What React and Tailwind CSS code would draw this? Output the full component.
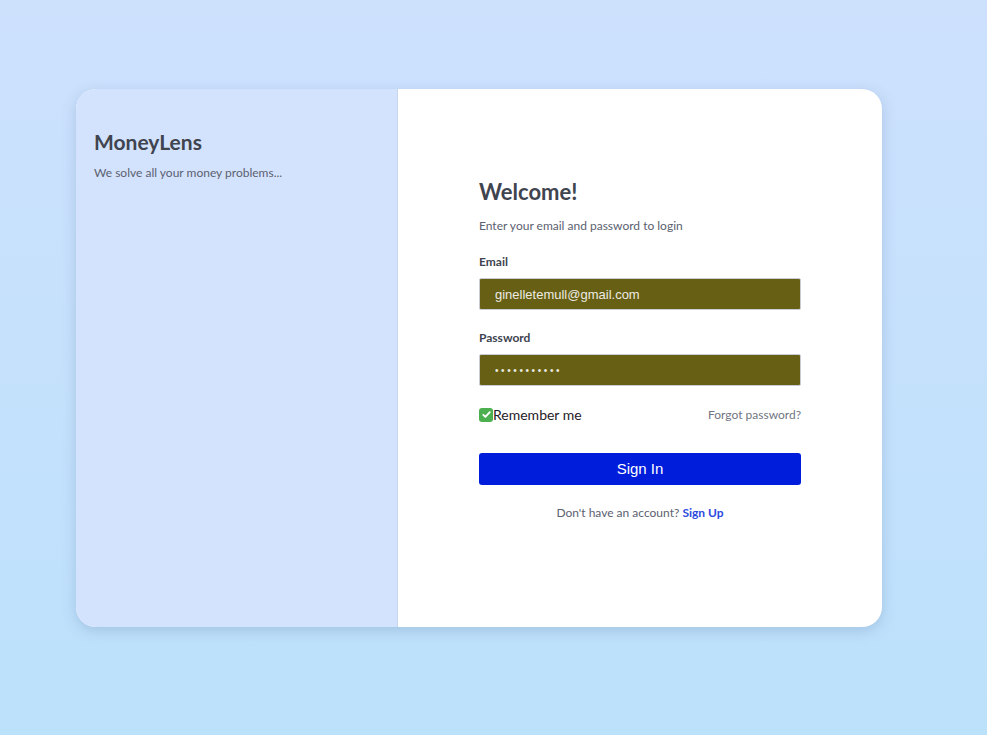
import React from 'react';

const CheckIcon = () => (
  <span className="flex h-[14px] w-[14px] items-center justify-center rounded-[3px] bg-[#4caf50]">
    <svg viewBox="0 0 12 12" className="h-[11px] w-[11px]" fill="none" stroke="white" strokeWidth="2" strokeLinecap="round" strokeLinejoin="round">
      <path d="M2.5 6.3l2.3 2.3 4.8-5.2" />
    </svg>
  </span>
);

export default function App() {
  return (
    <div
      className="flex min-h-[735px] w-full items-start justify-start bg-gradient-to-b from-[#cde1fd] to-[#bce1fb] pl-[76px] pt-[89px] text-[#3f4450]"
      style={{ fontFamily: 'Lato, "Open Sans", sans-serif' }}
    >
      <div className="flex h-[538px] w-[806px] overflow-hidden rounded-[20px] bg-white shadow-[0_4px_14px_rgba(80,110,160,0.25)]">
        {/* brand panel */}
        <div className="w-[322px] shrink-0 border-r border-[#c7d6ee] bg-[#d4e3fd] px-[18px] pt-[40px]">
          <h1 className="text-[21px] font-bold leading-[26px] text-[#40444f]">MoneyLens</h1>
          <p className="mt-[9px] text-[12px] text-[#5b6170]">We solve all your money problems...</p>
        </div>

        {/* form */}
        <div className="flex flex-1 justify-center pt-[89px]">
          <div className="w-[322px]">
            <h2 className="text-[22px] font-bold leading-[28px] text-[#40444f]">Welcome!</h2>
            <p className="mt-[11px] text-[12px] text-[#5b6170]">Enter your email and password to login</p>

            <label className="mt-[18px] block text-[12px] font-bold text-[#40444f]">Email</label>
            <input
              readOnly
              value="ginelletemull@gmail.com"
              className="mt-[7px] block h-[32px] w-full rounded-[2px] border border-[#c9ccd2] bg-[#675f13] px-[15px] text-[13px] text-[#ecebe2] outline-none"
              style={{ fontFamily: '"Liberation Sans", Arial, sans-serif' }}
            />

            <label className="mt-[19px] block text-[12px] font-bold text-[#40444f]">Password</label>
            <input
              readOnly
              type="password"
              value="password123"
              className="mt-[7px] block h-[32px] w-full rounded-[2px] border border-[#c9ccd2] bg-[#675f13] px-[15px] text-[10px] tracking-[2.6px] text-[#ecebe2] outline-none"
              style={{ fontFamily: '"Liberation Sans", Arial, sans-serif' }}
            />

            <div className="mt-[18px] flex items-center justify-between">
              <div className="flex items-center">
                <CheckIcon />
                <span className="text-[14px] text-[#1f2228]">Remember me</span>
              </div>
              <a className="text-[12px] text-[#70757f]">Forgot password?</a>
            </div>

            <button
              className="mt-[28px] h-[32px] w-full rounded-[3px] bg-[#001ddc] text-[15px] text-white"
              style={{ fontFamily: '"Liberation Sans", Arial, sans-serif' }}
            >
              Sign In
            </button>

            <p className="mt-[19px] text-center text-[12px] text-[#5b6170]">
              Don't have an account? <a className="font-bold text-[#2d4be0]">Sign Up</a>
            </p>
          </div>
        </div>
      </div>
    </div>
  );
}
